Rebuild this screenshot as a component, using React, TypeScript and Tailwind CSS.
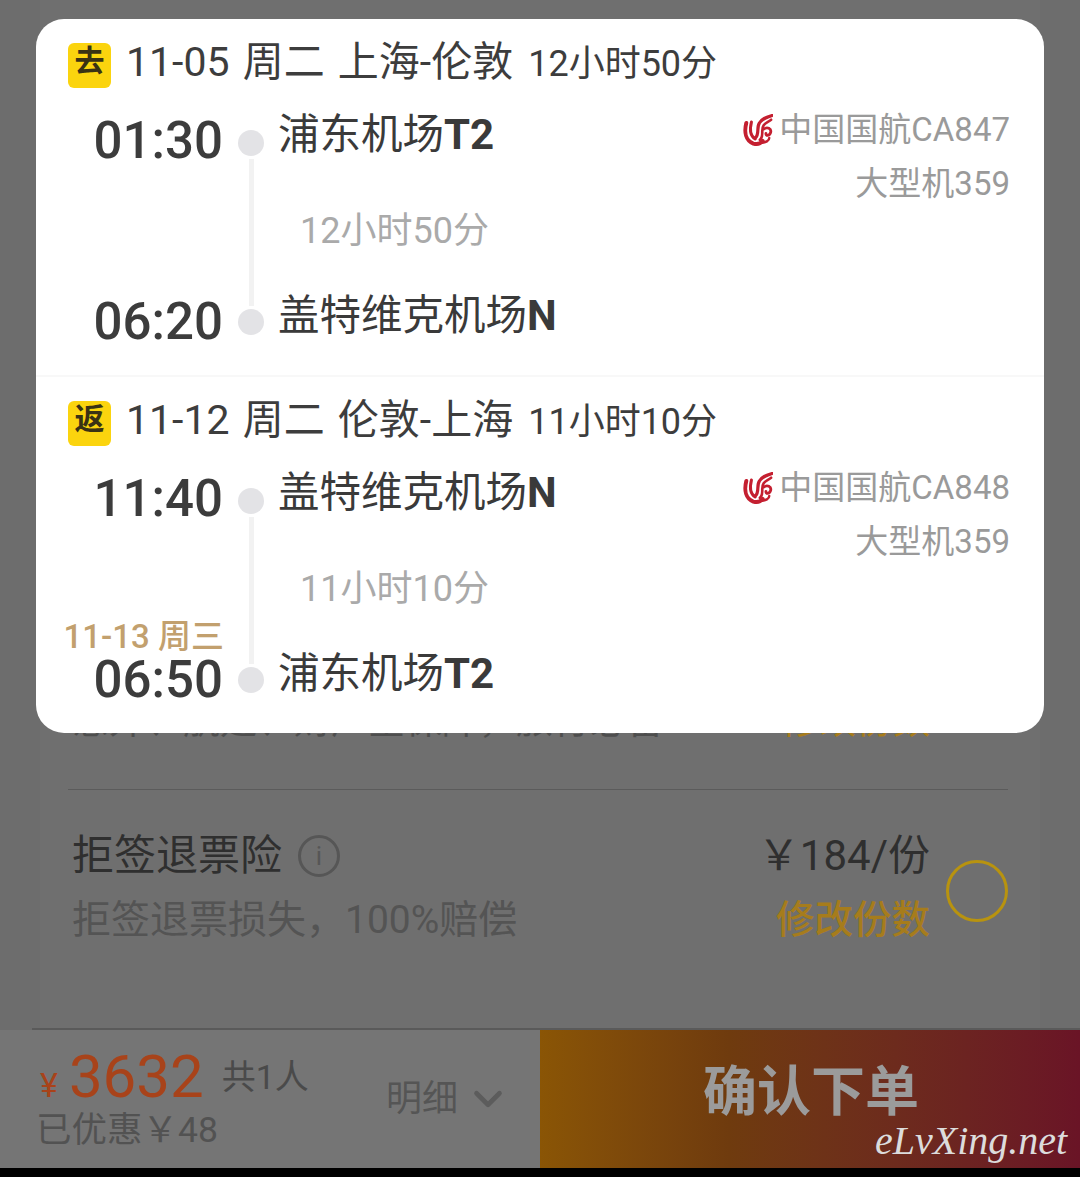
import React from 'react';
import { ChevronDown } from 'lucide-react';

const FONT = "font-['Roboto','Noto_Sans_CJK_SC',sans-serif]";

const AirChinaLogo = () => (
  <svg width="30" height="33" viewBox="0 0 32 34" fill="none" className="shrink-0">
    <g stroke="#c41f30" strokeLinecap="round" fill="none">
      <path d="M3.5 9 C1 19 3 28 11 31 C15 32 19 31 21 28" strokeWidth="4.2" />
      <path d="M9 8 C7 16 8 23 13 26" strokeWidth="3.2" />
      <path d="M13 25 C18 21 14 14 17.5 9 C20 4.5 25 3 31 1" strokeWidth="3.4" />
      <path d="M18 27 C23 23 18.5 16 22 11.5 C24 8.5 27 8 30 5.5" strokeWidth="2.8" />
      <path d="M22 15.5 C26 12.5 30.5 15 29.5 19 C28.5 23 24 23 24.5 20" strokeWidth="3" />
      <path d="M20 30 C24 30 28 28 28 25" strokeWidth="2.6" />
    </g>
  </svg>
);

interface FlightProps {
  tag: string;
  date: string;
  total: string;
  depTime: string;
  depPlace: string;
  depCode: string;
  arrTime: string;
  arrPlace: string;
  arrCode: string;
  flight: string;
  nextDay?: string;
}

const Dot = () => <div className="w-[26px] h-[26px] rounded-full bg-[#e3e3e6] shrink-0" />;

const Place = ({ name, code }: { name: string; code: string }) => (
  <div className="-ml-[2px] text-[41.5px] leading-[54px] text-[#3a3a3a] whitespace-nowrap">
    {name}
    <span className="font-bold text-[42px]">{code}</span>
  </div>
);

const Time = ({ value }: { value: string }) => (
  <div className="-mr-[1px] pt-[2px] font-['Roboto',sans-serif] text-[51px] leading-[58px] font-medium text-[#3c3c3c] text-right">{value}</div>
);

const FlightBlock = ({ tag, date, total, depTime, depPlace, depCode, arrTime, arrPlace, arrCode, flight, nextDay }: FlightProps) => (
  <div className="pt-[24px]">
    <div className="flex items-center pl-[32px] h-[45px]">
      <div className="w-[43px] h-[45px] rounded-[6px] bg-[#fbd40e] flex items-start justify-center text-[30px] leading-[36px] font-bold text-[#3a3214] shrink-0">
        {tag}
      </div>
      <div className="ml-[15px] text-[41px] leading-[48px] text-[#3d3d3d] whitespace-nowrap -mt-[6px] [word-spacing:3px]">
        {date}
        <span className="ml-[15px] text-[36px] [word-spacing:0]">{total}</span>
      </div>
    </div>
    <div className="mt-[22px] grid grid-cols-[186px_58px_1fr_auto] grid-rows-[60px_121px_60px] pr-[34px]">
      <Time value={depTime} />
      <div className="row-span-3 flex flex-col items-center pt-[20px] pb-[16px]">
        <Dot />
        <div className="w-[5px] flex-1 my-[3px] bg-[#f2f2f2]" />
        <Dot />
      </div>
      <div className="-mt-[2px]"><Place name={depPlace} code={depCode} /></div>
      <div className="row-span-3 -mt-[7px] flex flex-col items-end text-[33px] leading-[54px] text-[#9a9a9a]">
        <div className="flex items-center gap-[6px] whitespace-nowrap">
          <AirChinaLogo />
          中国国航{flight}
        </div>
        <div className="whitespace-nowrap">大型机359</div>
      </div>
      <div className="relative">
        {nextDay && (
          <div className="absolute right-[-2px] bottom-0 text-[33px] leading-[24px] font-medium text-[#c2a06e] whitespace-nowrap">{nextDay}</div>
        )}
      </div>
      <div className="pl-[20px] pt-[1px] flex items-center text-[36px] leading-[44px] text-[#aaaaaa] whitespace-nowrap">{total}</div>
      <Time value={arrTime} />
      <div className="-mt-[2px]"><Place name={arrPlace} code={arrCode} /></div>
    </div>
  </div>
);

export default function App() {
  return (
    <div className={`${FONT} relative w-[1080px] h-[1177px] overflow-hidden bg-[#6d6d6d] flex flex-col`}>
      {/* dimmed order page */}
      <div className="flex-1 mx-[40px] pt-[709px] pl-[28px] pr-[32px] bg-[#6f6f6f] flex flex-col">
        <div className="flex justify-between items-center h-[26px] pl-[4px] pr-[78px] text-[37px] leading-[26px] text-[#4e4e4e] whitespace-nowrap">
          <span>意外、航延、财产全保障，旅行必备</span>
          <span className="text-[#a67c1c]">修改份数</span>
        </div>
        <div className="mt-[54px] h-px bg-[#5b5b5b]" />
        <div className="mt-[40px] flex items-center pl-[4px]">
          <div className="flex-1">
            <div className="flex items-center h-[52px]">
              <span className="text-[42px] leading-[52px] text-[#2f2f2f]">拒签退票险</span>
              <span className="ml-[16px] w-[42px] h-[42px] rounded-full border-[3px] border-[#565656] flex items-center justify-center text-[26px] text-[#565656]">i</span>
            </div>
            <div className="mt-[12px] text-[39px] leading-[52px] text-[#545454] whitespace-nowrap">拒签退票损失，100%赔偿</div>
          </div>
          <div className="text-right">
            <div className="text-[42px] leading-[52px] text-[#2f2f2f] whitespace-nowrap">￥184/份</div>
            <div className="mt-[12px] text-[38.5px] leading-[52px] font-medium text-[#a67c1c] whitespace-nowrap">修改份数</div>
          </div>
          <div className="ml-[16px] mt-[6px] w-[62px] h-[62px] rounded-full border-[3px] border-[#b8930f]" />
        </div>
      </div>

      {/* bottom bar */}
      <div className="ml-[32px] h-[2px] bg-[#5a5a5a]" />
      <div className="h-[138px] flex">
        <div className="w-[540px] bg-[#757575] flex items-center pl-[36px]">
          <div className="w-[350px]">
            <div className="flex items-baseline h-[62px]">
              <span className="text-[34px] text-[#a8431a] ml-[4px] mr-[11px]">¥</span>
              <span className="text-[60px] leading-[62px] text-[#a8431a]">3632</span>
              <span className="ml-[18px] text-[34px] text-[#4a4a4a] relative -top-[8px]">共1人</span>
            </div>
            <div className="text-[35.5px] leading-[44px] text-[#525252] whitespace-nowrap">已优惠￥48</div>
          </div>
          <span className="text-[36px] text-[#555555] whitespace-nowrap">明细</span>
          <ChevronDown size={46} strokeWidth={2.4} className="ml-[7px] text-[#5c5c5c]" />
        </div>
        <div className="flex-1 bg-gradient-to-r from-[#8a5505] via-[#6f3b0e] via-35% to-[#6a1426] flex items-center pl-[163px] pb-[14px]">
          <span className="text-[54px] font-bold text-[#9b9b9b] whitespace-nowrap">确认下单</span>
        </div>
      </div>
      <div className="h-[9px] bg-black" />

      {/* watermark */}
      <div className="absolute left-[875px] top-[1119px] font-['Liberation_Serif',serif] italic text-[40px] leading-[44px] text-[#dcdcdc] whitespace-nowrap">
        eLvXing.net
      </div>

      {/* flight detail popup */}
      <div className="absolute left-[36px] top-[19px] w-[1008px] h-[714px] rounded-[28px] bg-white overflow-hidden">
        <div className="h-[358px] border-b-2 border-[#f8f8f8]">
          <FlightBlock
            tag="去"
            date="11-05 周二 上海-伦敦"
            total="12小时50分"
            depTime="01:30"
            depPlace="浦东机场"
            depCode="T2"
            arrTime="06:20"
            arrPlace="盖特维克机场"
            arrCode="N"
            flight="CA847"
          />
        </div>
        <FlightBlock
          tag="返"
          date="11-12 周二 伦敦-上海"
          total="11小时10分"
          depTime="11:40"
          depPlace="盖特维克机场"
          depCode="N"
          arrTime="06:50"
          arrPlace="浦东机场"
          arrCode="T2"
          flight="CA848"
          nextDay="11-13 周三"
        />
      </div>
    </div>
  );
}
